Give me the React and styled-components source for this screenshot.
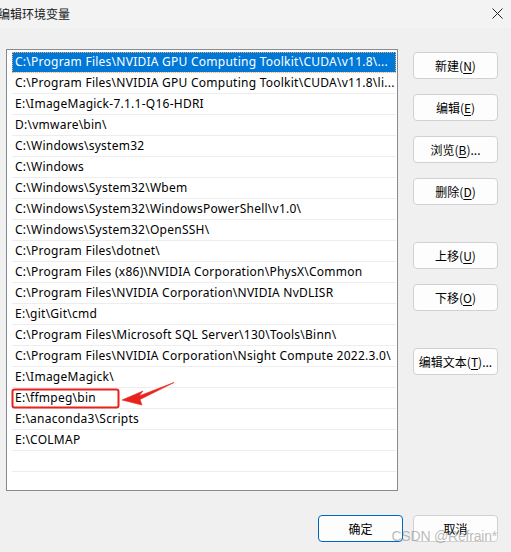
import React from 'react';
import styled, { createGlobalStyle } from 'styled-components';

const GlobalStyle = createGlobalStyle`
  html, body {
    margin: 0;
    padding: 0;
    background: #f0f0f0;
  }
  body {
    font-family: "Noto Sans", "Noto Sans CJK SC", sans-serif;
    font-size: 12px;
    color: #000;
  }
`;

const Window = styled.div`
  position: relative;
  width: 511px;
  height: 552px;
  overflow: hidden;
  background: #f0f0f0;
`;

const TitleBar = styled.div`
  height: 28px;
  display: flex;
  align-items: center;
  justify-content: space-between;
  background: #f3f3f3;
  padding-right: 8px;
`;

const Title = styled.span`
  font-family: "Noto Sans CJK SC", sans-serif;
  font-size: 12px;
  margin-left: -2px;
  margin-top: -2px;
  color: #1a1a1a;
`;

const CloseIcon = styled.svg`
  width: 11px;
  height: 11px;
  margin-top: -2px;
`;

const Body = styled.div`
  display: flex;
  align-items: flex-start;
  padding: 21px 13px 0 6px;
`;

const ListBox = styled.div`
  box-sizing: border-box;
  width: 392px;
  height: 442px;
  border: 1px solid #878a91;
  background: #fff;
  padding: 2px 1px 0 5px;
  overflow: hidden;
`;

const Row = styled.div`
  box-sizing: border-box;
  height: 21px;
  line-height: 20px;
  padding-left: 3px;
  letter-spacing: 0.25px;
  border-bottom: 1px solid #ededed;
  white-space: nowrap;
  overflow: hidden;
  text-overflow: ellipsis;
  background: ${p => (p.$selected ? '#0078d7' : 'transparent')};
  color: ${p => (p.$selected ? '#fff' : '#000')};
  outline: ${p => (p.$selected ? '1px dotted #f7b36a' : 'none')};
  outline-offset: -1px;
`;

const SideButtons = styled.div`
  display: flex;
  flex-direction: column;
  margin-left: 15px;
  padding-top: 3px;
`;

const Button = styled.button`
  box-sizing: border-box;
  width: 85px;
  height: 27px;
  margin-bottom: ${p => p.$after || 0}px;
  border: 1px solid ${p => (p.$primary ? '#0067c0' : '#d1d1d1')};
  border-radius: 4px;
  background: #fdfdfd;
  font-family: "Noto Sans CJK SC", sans-serif;
  font-size: 12px;
  color: #000;
  padding: 0;
  display: flex;
  align-items: center;
  justify-content: center;
  cursor: default;

  u {
    text-underline-offset: 2px;
  }
`;

const Footer = styled.div`
  display: flex;
  justify-content: flex-end;
  gap: 10px;
  padding: 24px 13px 0 0;
`;

const Overlay = styled.svg`
  position: absolute;
  left: 0;
  top: 0;
  width: 511px;
  height: 552px;
  pointer-events: none;
`;

const Watermark = styled.span`
  position: absolute;
  right: 14px;
  bottom: 8px;
  font-family: "Liberation Sans", sans-serif;
  font-size: 14px;
  letter-spacing: -0.2px;
  color: rgba(120, 120, 120, 0.5);
  pointer-events: none;
`;

const paths = [
  'C:\\Program Files\\NVIDIA GPU Computing Toolkit\\CUDA\\v11.8\\...',
  'C:\\Program Files\\NVIDIA GPU Computing Toolkit\\CUDA\\v11.8\\li...',
  'E:\\ImageMagick-7.1.1-Q16-HDRI',
  'D:\\vmware\\bin\\',
  'C:\\Windows\\system32',
  'C:\\Windows',
  'C:\\Windows\\System32\\Wbem',
  'C:\\Windows\\System32\\WindowsPowerShell\\v1.0\\',
  'C:\\Windows\\System32\\OpenSSH\\',
  'C:\\Program Files\\dotnet\\',
  'C:\\Program Files (x86)\\NVIDIA Corporation\\PhysX\\Common',
  'C:\\Program Files\\NVIDIA Corporation\\NVIDIA NvDLISR',
  'E:\\git\\Git\\cmd',
  'C:\\Program Files\\Microsoft SQL Server\\130\\Tools\\Binn\\',
  'C:\\Program Files\\NVIDIA Corporation\\Nsight Compute 2022.3.0\\',
  'E:\\ImageMagick\\',
  'E:\\ffmpeg\\bin',
  'E:\\anaconda3\\Scripts',
  'E:\\COLMAP',
  '',
];

const sideButtons = [
  { label: '新建', key: 'N', after: 15 },
  { label: '编辑', key: 'E', after: 15 },
  { label: '浏览', key: 'B', tail: '...', after: 15 },
  { label: '删除', key: 'D', after: 37 },
  { label: '上移', key: 'U', after: 15 },
  { label: '下移', key: 'O', after: 37 },
  { label: '编辑文本', key: 'T', tail: '...', after: 0 },
];

export default function App() {
  return (
    <Window>
      <GlobalStyle />
      <TitleBar>
        <Title>编辑环境变量</Title>
        <CloseIcon viewBox="0 0 11 11">
          <path d="M0.5 0.5 L10.5 10.5 M10.5 0.5 L0.5 10.5" stroke="#222" strokeWidth="1" fill="none" />
        </CloseIcon>
      </TitleBar>
      <Body>
        <ListBox>
          {paths.map((p, i) => (
            <Row key={i} $selected={i === 0}>{p || '\u00a0'}</Row>
          ))}
        </ListBox>
        <SideButtons>
          {sideButtons.map(b => (
            <Button key={b.key} $after={b.after}>
              {b.label}(<u>{b.key}</u>){b.tail}
            </Button>
          ))}
        </SideButtons>
      </Body>
      <Footer>
        <Button $primary>确定</Button>
        <Button>取消</Button>
      </Footer>
      <Overlay viewBox="0 0 511 552">
        <rect x="12.5" y="389.5" width="106" height="18" rx="2" fill="none" stroke="#e8231d" strokeWidth="2" />
        <path
          d="M122 400 L143 391 L139 396 L174 382.5 L140 399.5 L142 405 Z"
          fill="#e8231d"
          stroke="#e8231d"
          strokeWidth="0.6"
          strokeLinejoin="round"
        />
      </Overlay>
      <Watermark>CSDN @Refrain*</Watermark>
    </Window>
  );
}
